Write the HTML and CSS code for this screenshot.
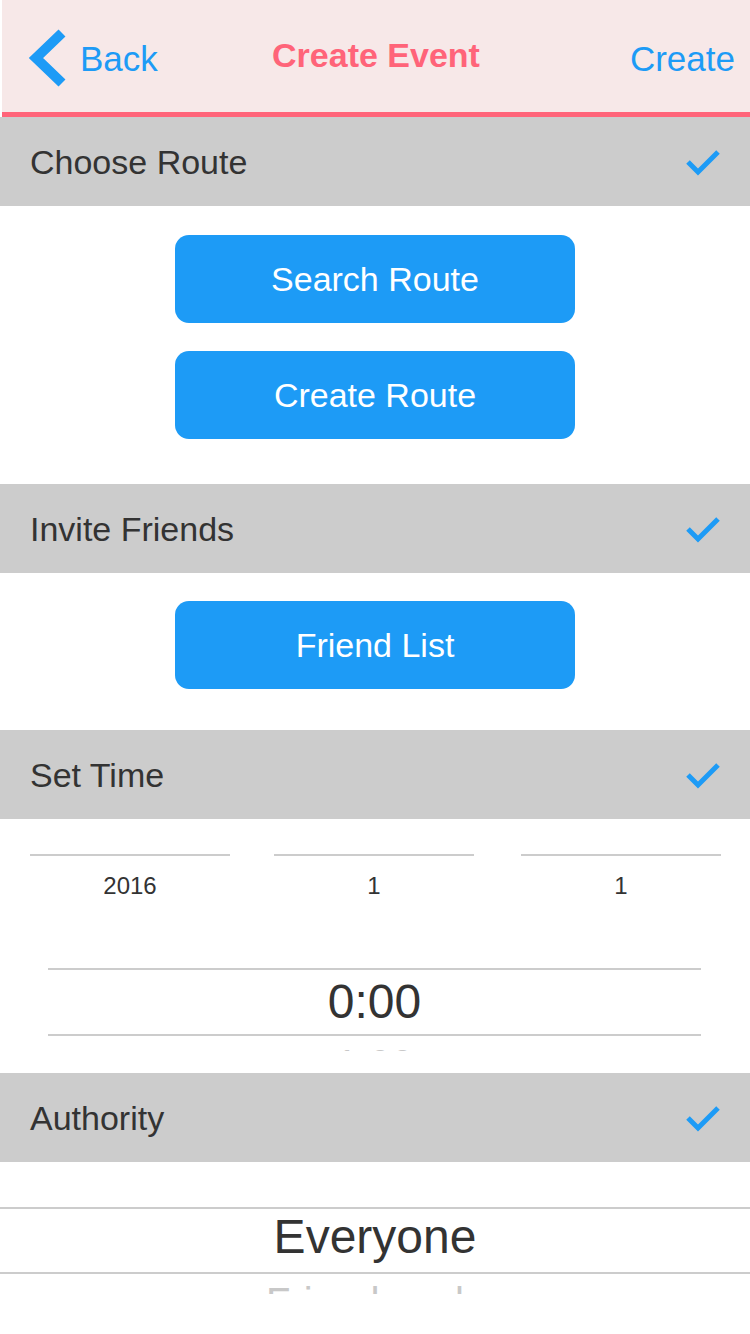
FILE: index.html
```html
<!DOCTYPE html>
<html lang="en">
<head>
<meta charset="utf-8">
<title>Create Event</title>
<link rel="stylesheet" href="styles.css">
</head>
<body>
<div class="app">
  <header class="topbar">
    <a class="nav-back">
      <svg class="chevron" width="44" height="64" viewBox="0 0 44 64" aria-hidden="true">
        <polyline points="36,7 10,32 36,57" fill="none" stroke="#1d9bf6" stroke-width="10" stroke-linejoin="miter"/>
      </svg>
      <span class="nav-text">Back</span>
    </a>
    <h1 class="title">Create Event</h1>
    <a class="nav-action">Create</a>
  </header>

  <section class="section">
    <div class="section-head">
      <span class="section-title">Choose Route</span>
      <svg class="check" width="40" height="30" viewBox="0 0 40 30" aria-hidden="true"><polyline points="5,15 15,25 35,5" fill="none" stroke="#1d9bf6" stroke-width="5"/></svg>
    </div>
    <div class="section-body btn-group route-body">
      <button class="btn">Search Route</button>
      <button class="btn">Create Route</button>
    </div>
  </section>

  <section class="section">
    <div class="section-head">
      <span class="section-title">Invite Friends</span>
      <svg class="check" width="40" height="30" viewBox="0 0 40 30" aria-hidden="true"><polyline points="5,15 15,25 35,5" fill="none" stroke="#1d9bf6" stroke-width="5"/></svg>
    </div>
    <div class="section-body btn-group friends-body">
      <button class="btn">Friend List</button>
    </div>
  </section>

  <section class="section">
    <div class="section-head">
      <span class="section-title">Set Time</span>
      <svg class="check" width="40" height="30" viewBox="0 0 40 30" aria-hidden="true"><polyline points="5,15 15,25 35,5" fill="none" stroke="#1d9bf6" stroke-width="5"/></svg>
    </div>
    <div class="section-body time-body">
      <div class="date-row">
        <div class="date-col">2016</div>
        <div class="date-col">1</div>
        <div class="date-col">1</div>
      </div>
      <div class="wheel time-wheel">
        <div class="wheel-sel time-sel">0:00</div>
        <div class="wheel-next">1:00</div>
      </div>
    </div>
  </section>

  <section class="section">
    <div class="section-head">
      <span class="section-title">Authority</span>
      <svg class="check" width="40" height="30" viewBox="0 0 40 30" aria-hidden="true"><polyline points="5,15 15,25 35,5" fill="none" stroke="#1d9bf6" stroke-width="5"/></svg>
    </div>
    <div class="section-body auth-body">
      <div class="wheel auth-wheel">
        <div class="wheel-sel auth-sel">Everyone</div>
        <div class="wheel-next">Friends only</div>
      </div>
    </div>
  </section>
</div>
</body>
</html>
```

FILE: styles.css
```css
* { box-sizing: border-box; }

html, body {
  margin: 0;
  padding: 0;
  background: #ffffff;
}

body {
  font-family: "Liberation Sans", Arial, sans-serif;
  color: #333333;
}

.app {
  width: 750px;
}

/* Top bar */
.topbar {
  margin-left: 2px;
  height: 117px;
  background: #f7e8e8;
  border-bottom: 5px solid #ff6479;
  display: grid;
  grid-template-columns: 1fr auto 1fr;
  align-items: start;
}

.nav-back {
  display: flex;
  align-items: flex-start;
  padding-left: 24px;
  color: #1d9bf6;
  text-decoration: none;
}

.chevron {
  display: block;
  margin-top: 26px;
}

.nav-text {
  margin-left: 10px;
  margin-top: 39px;
  font-size: 35px;
  line-height: 40px;
}

.title {
  margin: 35px 0 0;
  font-size: 34px;
  line-height: 40px;
  font-weight: bold;
  color: #ff6479;
  text-align: center;
}

.nav-action {
  justify-self: end;
  margin-top: 39px;
  padding-right: 15px;
  font-size: 35px;
  line-height: 40px;
  color: #1d9bf6;
  text-decoration: none;
}

/* Sections */
.section-head {
  height: 89px;
  background: #cccccc;
  display: flex;
  align-items: center;
  justify-content: space-between;
  padding: 0 27px 0 30px;
}

.section-title {
  font-size: 34px;
  line-height: 40px;
  color: #333333;
}

.check {
  display: block;
}

.btn-group {
  display: flex;
  flex-direction: column;
  align-items: center;
  gap: 28px;
}

.route-body {
  padding: 29px 0 45px;
}

.friends-body {
  padding: 28px 0 41px;
}

.btn {
  width: 400px;
  height: 88px;
  border: none;
  border-radius: 14px;
  background: #1d9bf6;
  color: #ffffff;
  font-family: inherit;
  font-size: 34px;
  line-height: 40px;
  padding: 0;
}

/* Time */
.time-body {
  padding: 35px 0 22px;
}

.date-row {
  display: flex;
  padding: 0 29px 0 30px;
}

.date-col {
  width: 200px;
  border-top: 2px solid #cccccc;
  padding-top: 15px;
  font-size: 24px;
  line-height: 30px;
  text-align: center;
  color: #333333;
}

.date-col + .date-col {
  margin-left: 44px;
}

.date-col:last-child {
  margin-left: 47px;
}

.wheel {
  overflow: hidden;
  text-align: center;
}

.wheel-sel {
  border-top: 2px solid #cccccc;
  border-bottom: 2px solid #cccccc;
  font-size: 48px;
  color: #333333;
}

.wheel-next {
  font-size: 40px;
  line-height: 56px;
  color: #c8c8c8;
}

.time-wheel {
  margin: 67px 49px 0 48px;
  height: 83px;
}

.time-sel {
  line-height: 64px;
}

/* Authority */
.auth-body {
  padding-top: 45px;
}

.auth-wheel {
  height: 87px;
}

.auth-sel {
  line-height: 56px;
  padding-bottom: 7px;
}
```
